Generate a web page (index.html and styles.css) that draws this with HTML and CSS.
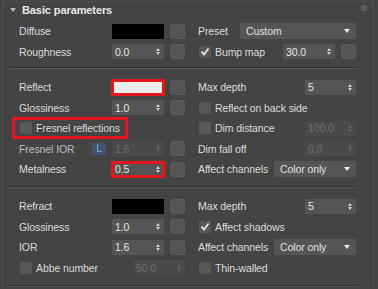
FILE: index.html
```html
<!DOCTYPE html>
<html lang="en">
<head>
    <meta charset="UTF-8">
    <meta name="viewport" content="width=device-width, initial-scale=1.0">
    <title>Basic parameters</title>
    <link rel="stylesheet" href="styles.css">
</head>
<body>
    <div class="rollout">
        <div class="rollout-title">
            <span class="caret"></span>
            <h3>Basic parameters</h3>
            <span class="pin"></span>
        </div>

        <!-- Diffuse -->
        <div class="section first">
            <div class="col">
                <div class="row">
                    <span class="label">Diffuse</span>
                    <span class="swatch black"></span>
                    <span class="map-btn"></span>
                </div>
                <div class="row">
                    <span class="label">Roughness</span>
                    <span class="spin"><span>0.0</span><i class="arrows"></i></span>
                    <span class="map-btn"></span>
                </div>
            </div>
            <div class="col">
                <div class="row">
                    <span class="label">Preset</span>
                    <span class="dropdown wide">Custom</span>
                </div>
                <div class="row">
                    <span class="check on"><svg width="10" height="9" viewBox="0 0 10 9"><polyline points="1.5,4.5 4,7.5 8.5,1.5" fill="none" stroke="#e4e4e4" stroke-width="1.8"/></svg></span>
                    <span class="label">Bump map</span>
                    <span class="spin"><span>30.0</span><i class="arrows"></i></span>
                    <span class="map-btn"></span>
                </div>
            </div>
        </div>
        <div class="sep"></div>

        <!-- Reflection -->
        <div class="section">
            <div class="col">
                <div class="row">
                    <span class="label">Reflect</span>
                    <span class="swatch white hl"></span>
                    <span class="map-btn"></span>
                </div>
                <div class="row">
                    <span class="label">Glossiness</span>
                    <span class="spin"><span>1.0</span><i class="arrows"></i></span>
                    <span class="map-btn"></span>
                </div>
                <div class="row">
                    <span class="hl-box">
                        <span class="check"></span>
                        <span>Fresnel reflections</span>
                    </span>
                </div>
                <div class="row">
                    <span class="label dim">Fresnel IOR</span>
                    <span class="lock">L</span>
                    <span class="spin off"><span>1.6</span><i class="arrows"></i></span>
                    <span class="map-btn"></span>
                </div>
                <div class="row">
                    <span class="label">Metalness</span>
                    <span class="spin hl"><span>0.5</span><i class="arrows"></i></span>
                    <span class="map-btn"></span>
                </div>
            </div>
            <div class="col">
                <div class="row">
                    <span class="label">Max depth</span>
                    <span class="spin short"><span>5</span><i class="arrows"></i></span>
                </div>
                <div class="row">
                    <span class="check"></span>
                    <span class="label">Reflect on back side</span>
                </div>
                <div class="row">
                    <span class="check"></span>
                    <span class="label">Dim distance</span>
                    <span class="spin short off"><span>100.0</span><i class="arrows"></i></span>
                </div>
                <div class="row">
                    <span class="label">Dim fall off</span>
                    <span class="spin short off"><span>0.0</span><i class="arrows"></i></span>
                </div>
                <div class="row">
                    <span class="label">Affect channels</span>
                    <span class="dropdown narrow">Color only</span>
                </div>
            </div>
        </div>
        <div class="sep"></div>

        <!-- Refraction -->
        <div class="section">
            <div class="col">
                <div class="row">
                    <span class="label">Refract</span>
                    <span class="swatch black"></span>
                    <span class="map-btn"></span>
                </div>
                <div class="row">
                    <span class="label">Glossiness</span>
                    <span class="spin"><span>1.0</span><i class="arrows"></i></span>
                    <span class="map-btn"></span>
                </div>
                <div class="row">
                    <span class="label">IOR</span>
                    <span class="spin"><span>1.6</span><i class="arrows"></i></span>
                    <span class="map-btn"></span>
                </div>
                <div class="row">
                    <span class="check"></span>
                    <span class="label">Abbe number</span>
                    <span class="spin off"><span>50.0</span><i class="arrows"></i></span>
                </div>
            </div>
            <div class="col">
                <div class="row">
                    <span class="label">Max depth</span>
                    <span class="spin short"><span>5</span><i class="arrows"></i></span>
                </div>
                <div class="row">
                    <span class="check on"><svg width="10" height="9" viewBox="0 0 10 9"><polyline points="1.5,4.5 4,7.5 8.5,1.5" fill="none" stroke="#e4e4e4" stroke-width="1.8"/></svg></span>
                    <span class="label">Affect shadows</span>
                </div>
                <div class="row">
                    <span class="label">Affect channels</span>
                    <span class="dropdown narrow">Color only</span>
                </div>
                <div class="row">
                    <span class="check"></span>
                    <span class="label">Thin-walled</span>
                </div>
            </div>
        </div>
        <div class="sep"></div>
    </div>
</body>
</html>
```

FILE: styles.css
```css
/* 3ds Max style dark rollout */
body {
    margin: 0;
    background-color: #444444;
    font-family: "Liberation Sans", Arial, sans-serif;
    font-size: 10.5px;
    letter-spacing: -0.1px;
    color: #dcdcdc;
    overflow: hidden;
}

.rollout {
    margin: 1px 4px 0 2px;
    border: 1px solid #505050;
    border-bottom: none;
}

.rollout-title {
    display: flex;
    align-items: center;
    height: 16px;
    margin-bottom: 3px;
    padding-left: 7px;
}

.caret {
    width: 0;
    height: 0;
    border-left: 3px solid transparent;
    border-right: 3px solid transparent;
    border-top: 4px solid #b4b4b4;
    margin-right: 6px;
}

.rollout-title h3 {
    margin: 0;
    font-size: 11px;
    font-weight: bold;
    color: #e8e8e8;
    letter-spacing: -0.1px;
}

.pin {
    align-self: flex-start;
    margin: 3px 6px 0 auto;
    width: 6px;
    height: 6px;
    background-color: #5a5a5a;
}

.section {
    display: grid;
    grid-template-columns: 166px 158px;
    column-gap: 13px;
    padding: 8px 0 6.5px 16px;
}

.section.first {
    padding-top: 0;
    padding-bottom: 5px;
}

.col {
    display: flex;
    flex-direction: column;
}

.row {
    display: flex;
    align-items: center;
    height: 20.5px;
}

.label {
    flex: 1;
    white-space: nowrap;
}

.label.dim {
    color: #bdbdbd;
}

/* separators between groups */
.sep {
    margin: 0 16px 0 6px;
    border-top: 1px solid #2f2f2f;
    border-bottom: 1px solid #565656;
}

.swatch {
    width: 52px;
    height: 15px;
    flex: none;
}

.black {
    background-color: #000;
}

.white {
    background-color: #ececec;
}

.spin {
    width: 52px;
    height: 15px;
    flex: none;
    box-sizing: border-box;
    padding: 0 4px 0 3px;
    display: flex;
    align-items: center;
    justify-content: space-between;
    background-color: #555555;
    color: #e6e6e6;
    margin-left: auto;
}

.spin.short {
    width: 51px;
}

.spin.off {
    background-color: #4a4a4a;
    color: #6e6e6e;
}

.arrows {
    display: flex;
    flex-direction: column;
    gap: 1px;
}

.arrows::before,
.arrows::after {
    content: "";
    border-left: 2.5px solid transparent;
    border-right: 2.5px solid transparent;
}

.arrows::before {
    border-bottom: 3px solid #cfcfcf;
}

.arrows::after {
    border-top: 3px solid #cfcfcf;
}

.spin.off .arrows::before {
    border-bottom-color: #666;
}

.spin.off .arrows::after {
    border-top-color: #666;
}

.map-btn {
    width: 15px;
    height: 15px;
    flex: none;
    box-sizing: border-box;
    margin-left: 6px;
    background-color: #555555;
    border: 1px solid #5b5b5b;
    border-radius: 3px;
}

.check {
    width: 12px;
    height: 12px;
    flex: none;
    margin: 0 4px 0 1px;
    background-color: #575757;
    border-radius: 1px;
    display: flex;
    align-items: center;
    justify-content: center;
}

.dropdown {
    height: 16px;
    flex: none;
    box-sizing: border-box;
    padding: 0 6px;
    margin-left: auto;
    display: flex;
    align-items: center;
    justify-content: space-between;
    background-color: #555555;
    color: #e0e0e0;
}

.dropdown::after {
    content: "";
    border-left: 3px solid transparent;
    border-right: 3px solid transparent;
    border-top: 4px solid #ececec;
}

.dropdown.wide {
    width: 116px;
}

.dropdown.narrow {
    width: 82px;
}

.lock {
    width: 14px;
    height: 12px;
    flex: none;
    margin-right: 6px;
    border-radius: 2px;
    background-color: #3e5674;
    color: #8ea6c6;
    font-size: 10px;
    display: flex;
    align-items: center;
    justify-content: center;
}

/* red highlight marks */
.hl {
    outline: 3px solid #e3161d;
    outline-offset: -2px;
}

.hl-box {
    display: flex;
    align-items: center;
    margin-left: -4px;
    padding: 2px 5px 2px 4px;
    outline: 3px solid #e3161d;
}
```
